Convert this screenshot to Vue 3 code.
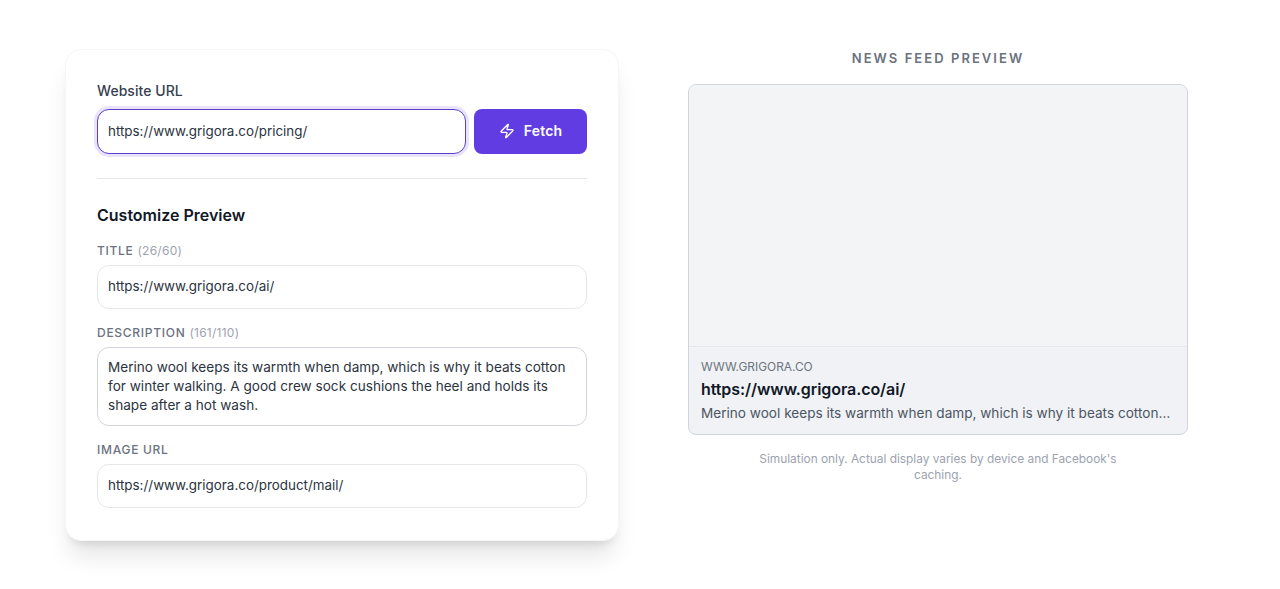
<script setup>
const title = 'https://www.grigora.co/ai/'
const desc = 'Merino wool keeps its warmth when damp, which is why it beats cotton for winter walking. A good crew sock cushions the heel and holds its shape after a hot wash.'
</script>

<template>
  <div class="page">
    <section class="card">
      <label class="url-label" for="url">Website URL</label>
      <div class="url-row">
        <input id="url" class="field focused" value="https://www.grigora.co/pricing/" />
        <button class="fetch" type="button">
          <svg width="16" height="16" viewBox="0 0 24 24" fill="none" stroke="currentColor" stroke-width="2" stroke-linecap="round" stroke-linejoin="round"><path d="M4 14a1 1 0 0 1-.78-1.63l9.9-10.2a.5.5 0 0 1 .86.46l-1.92 6.02A1 1 0 0 0 13 10h7a1 1 0 0 1 .78 1.63l-9.9 10.2a.5.5 0 0 1-.86-.46l1.92-6.02A1 1 0 0 0 11 14z"/></svg>
          <span>Fetch</span>
        </button>
      </div>
      <hr class="divider" />
      <h2 class="heading">Customize Preview</h2>
      <div class="group">
        <label class="small-label">TITLE <span class="count">(26/60)</span></label>
        <input class="field" :value="title" />
      </div>
      <div class="group">
        <label class="small-label">DESCRIPTION <span class="count">(161/110)</span></label>
        <textarea class="field area" rows="3" :value="desc"></textarea>
      </div>
      <div class="group last">
        <label class="small-label">IMAGE URL</label>
        <input class="field" value="https://www.grigora.co/product/mail/" />
      </div>
    </section>

    <section class="preview">
      <h3 class="preview-title">NEWS FEED PREVIEW</h3>
      <div class="fb">
        <div class="fb-image"></div>
        <div class="fb-meta">
          <div class="fb-domain">WWW.GRIGORA.CO</div>
          <div class="fb-title">{{ title }}</div>
          <div class="fb-desc">{{ desc }}</div>
        </div>
      </div>
      <p class="note">Simulation only. Actual display varies by device and Facebook's caching.</p>
    </section>
  </div>
</template>

<style>
html, body { margin: 0; background: #fff; }
</style>

<style scoped>
* { box-sizing: border-box; }
.page {
  display: grid;
  grid-template-columns: 554px 554px;
  column-gap: 42px;
  padding: 49px 65px 0;
  height: 589px;
  overflow: hidden;
  font-family: Inter, "Liberation Sans", sans-serif;
  align-items: start;
}
.card {
  height: 492px;
  padding: 32px 31px;
  background: #fff;
  border: 1px solid #f5f6f7;
  border-radius: 16px;
  box-shadow: 0 20px 25px -5px rgba(0,0,0,.1), 0 8px 10px -6px rgba(0,0,0,.12);
}
.url-label {
  display: block;
  font-size: 14px;
  line-height: 20px;
  font-weight: 500;
  letter-spacing: .05px;
  color: #374151;
  margin-top: -1px;
  margin-bottom: 8px;
}
.url-row { display: flex; gap: 8px; }
.field {
  display: block;
  width: 100%;
  height: 44px;
  padding: 0 10px 2px;
  font: 400 13.4px/19px Inter, "Liberation Sans", sans-serif;
  color: #2b3340;
  background: #fff;
  border: 1px solid #e5e7eb;
  border-radius: 12px;
  outline: none;
}
.focused {
  flex: 1;
  width: auto;
  min-width: 0;
  height: 45px;
  border-color: #5b3fc9;
  box-shadow: 0 0 0 3px rgba(99, 60, 230, .14);
}
.area {
  height: 79px;
  padding: 10px;
  font-size: 13.6px;
  resize: none;
  border-color: #d1d5db;
  overflow: hidden;
}
.fetch {
  display: flex;
  align-items: center;
  justify-content: center;
  gap: 9px;
  width: 113px;
  height: 45px;
  padding: 0 0 2px;
  border: 0;
  border-radius: 8px;
  background: #603ce2;
  color: #fff;
  font: 600 14px/20px Inter, "Liberation Sans", sans-serif;
  letter-spacing: .2px;
}
.divider {
  height: 1px;
  border: 0;
  background: #e5e7eb;
  margin: 24px 0 24px;
}
.heading {
  margin: 0 0 16px;
  font-size: 16px;
  line-height: 24px;
  font-weight: 600;
  color: #111827;
}
.group { margin-bottom: 16px; }
.small-label {
  display: block;
  font-size: 12px;
  line-height: 16px;
  font-weight: 500;
  letter-spacing: .72px;
  color: #6b7280;
  margin-bottom: 6px;
}
.count { font-weight: 400; letter-spacing: .25px; color: #9ca3af; }
.preview { display: flex; flex-direction: column; align-items: center; }
.preview-title {
  margin: 0 0 17px;
  font-size: 13px;
  line-height: 18px;
  font-weight: 600;
  letter-spacing: 2.05px;
  color: #6b7280;
}
.fb {
  width: 500px;
  height: 351px;
  border: 1px solid #d1d5db;
  border-radius: 8px;
  overflow: hidden;
  background: #f0f2f5;
}
.fb-image { height: 262px; background: #f3f4f6; border-bottom: 1px solid #e5e7eb; }
.fb-meta { padding: 12px; }
.fb-domain { font-size: 11.9px; line-height: 16px; color: #6b7280; }
.fb-title {
  margin-top: 3px;
  font-size: 16px;
  line-height: 22px;
  font-weight: 600;
  letter-spacing: -.08px;
  color: #111827;
}
.fb-desc {
  margin-top: 3px;
  margin-right: 4px;
  font-size: 13.6px;
  line-height: 20px;
  color: #4b5563;
  white-space: nowrap;
  overflow: hidden;
  text-overflow: ellipsis;
}
.note {
  width: 400px;
  margin: 16px 0 0;
  text-align: center;
  font-size: 11.87px;
  line-height: 16px;
  color: #9ca3af;
}
</style>
